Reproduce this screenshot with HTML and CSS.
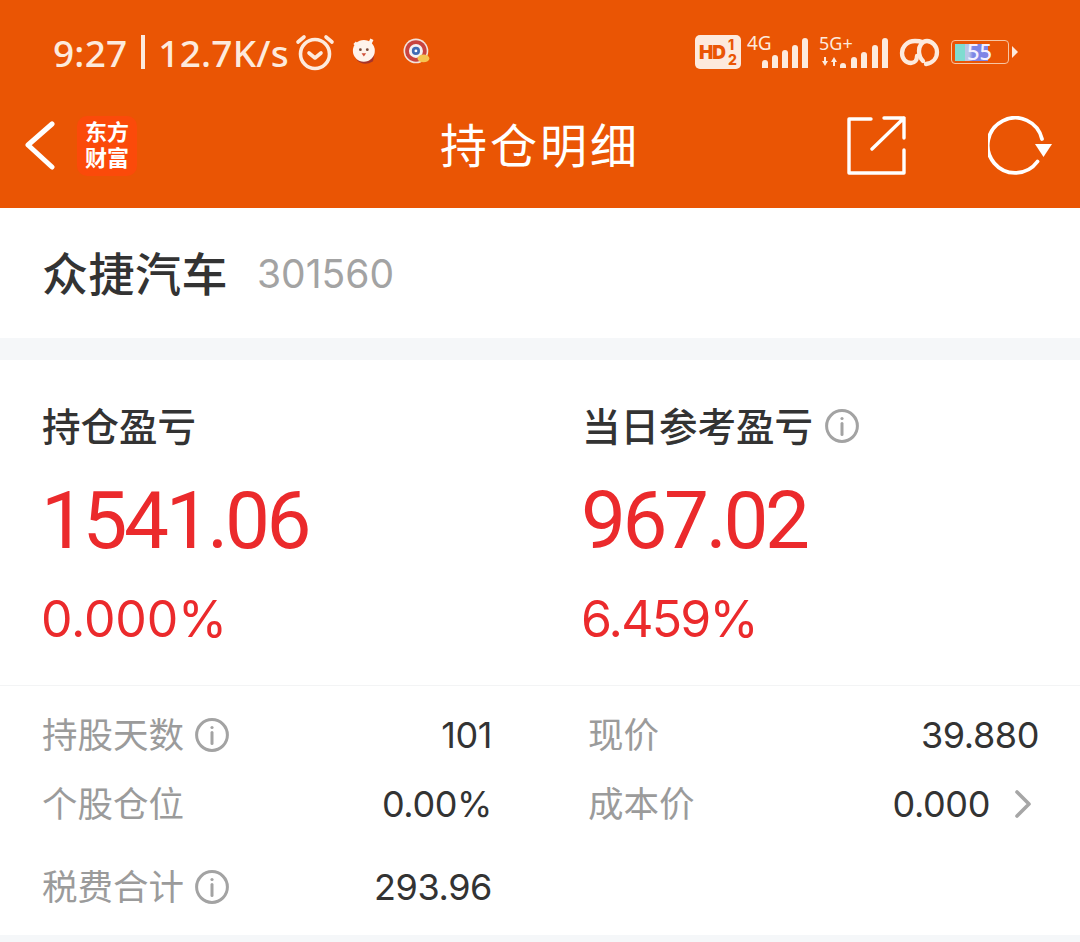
FILE: index.html
```html
<!DOCTYPE html>
<html lang="zh">

<head>
  <meta charset="UTF-8">
  <title>持仓明细</title>
  <link rel="stylesheet" href="styles.css">
</head>

<body>
  <header class="top">
    <div class="status">
      <div class="status_left">
        <span class="clock">9:27</span>
        <span class="sep"></span>
        <span class="speed">12.7K/s</span>
        <svg class="alarm" width="40" height="38" viewBox="0 0 40 38" fill="none" stroke="#fdeadd" stroke-width="3.600" stroke-linecap="round" stroke-linejoin="round">
          <circle cx="20" cy="21" r="14.500" />
          <path d="M14 20l6 5 6-5" />
          <path d="M3 9l6-5M37 9l-6-5" />
        </svg>
        <svg class="app_a" width="30" height="30" viewBox="0 0 26 26">
          <path d="M6 20q6 6 14 1l1-6-12 1z" fill="#a8352a" />
          <circle cx="12" cy="12" r="9.500" fill="#fff4ec" />
          <path d="M4 5l3 3M19 2l-2 4" stroke="#fff4ec" stroke-width="3" />
          <circle cx="9" cy="11" r="1.200" fill="#7a4a38" />
          <circle cx="15" cy="11" r="1.200" fill="#7a4a38" />
          <path d="M10 14h4l-2 3z" fill="#d0503a" />
        </svg>
        <svg class="app_b" width="28" height="28" viewBox="0 0 26 26">
          <circle cx="12" cy="12" r="11.500" fill="#f3e3dc" />
          <circle cx="12" cy="12" r="10" fill="#c8443f" />
          <circle cx="12" cy="12" r="6.500" fill="#f4f1f2" />
          <circle cx="12" cy="12" r="3.800" fill="#3f6cb5" />
          <circle cx="12" cy="12" r="1.300" fill="#fff" />
          <ellipse cx="19" cy="19" rx="5.500" ry="3.600" fill="#f5c451" />
        </svg>
      </div>
      <div class="status_right">
        <span class="hd"><span class="hd_name">HD</span><span class="hd_sim"><i>1</i><i>2</i></span></span>
        <span class="net net_4g">
          <span class="net_name">4G</span>
          <span class="bars"><i class="b1"></i><i class="b2"></i><i class="b3"></i><i class="b4"></i><i class="b5"></i></span>
        </span>
        <span class="net net_5g">
          <span class="net_name">5G+</span>
          <svg class="arrows" width="15" height="9" viewBox="0 0 15 9" fill="#fdeadd">
            <path d="M2 0h2v4h2L3 9 0 4h2zM11 9h2V5h2l-3-5-3 5h2z" />
          </svg>
          <span class="bars"><i class="b1"></i><i class="b2"></i><i class="b3"></i><i class="b4"></i><i class="b5"></i></span>
        </span>
        <svg class="link" width="41" height="29" viewBox="0 0 41 29" fill="none" stroke="#fdeadd" stroke-width="4.300" stroke-linecap="round">
          <path d="M23 4c-2-1-4-1-7-1C8 3 3 9 3 15c0 6 4 10 9 10 4 0 6-3 6-7" />
          <path d="M27 26c7-1 11-6 11-12 0-6-5-11-10-11-5 0-8 5-8 10 0 5 2 8 4 10" />
        </svg>
        <span class="battery">
          <span class="battery_box">
            <span class="battery_fill"></span>
            <span class="battery_num">55</span>
          </span>
          <span class="battery_tip"></span>
        </span>
      </div>
    </div>

    <nav class="nav">
      <div class="nav_left">
        <svg class="back" width="32" height="50" viewBox="0 0 32 50" fill="none" stroke="#fff" stroke-width="5" stroke-linecap="round" stroke-linejoin="round">
          <path d="M28 3L4 24l24 22" />
        </svg>
        <div class="logo"><span>东方</span><span>财富</span></div>
      </div>
      <h1 class="nav_title">持仓明细</h1>
      <div class="nav_right">
        <svg class="share" width="60" height="60" viewBox="0 0 60 60" fill="none" stroke="#fff" stroke-width="3.400" stroke-linecap="round" stroke-linejoin="round">
          <path d="M24 3H2v54h55V34" />
          <path d="M37 2h20v20M57 2L25 33" />
        </svg>
        <svg class="refresh" width="66" height="60" viewBox="0 0 66 60" fill="none">
          <path d="M54 23A27.500 27.500 0 1 0 49.500 45.500" stroke="#fff" stroke-width="3.800" stroke-linecap="round" />
          <path d="M47 28h17l-8.500 13z" fill="#fff" />
        </svg>
      </div>
    </nav>
  </header>

  <section class="stock">
    <h2 class="stock_name">众捷汽车</h2>
    <span class="stock_code">301560</span>
  </section>

  <section class="panel">
    <div class="profit">
      <div class="profit_col">
        <h3 class="profit_tit">持仓盈亏</h3>
        <strong class="profit_num">1541.06</strong>
        <span class="profit_rate">0.000%</span>
      </div>
      <div class="profit_col">
        <h3 class="profit_tit">当日参考盈亏
          <svg class="info" viewBox="0 0 34 34"><circle cx="17" cy="17" r="15.400" /><path d="M17 14.500v11" /><circle class="dot" cx="17" cy="9.500" r="1.600" /></svg>
        </h3>
        <strong class="profit_num">967.02</strong>
        <span class="profit_rate">6.459%</span>
      </div>
    </div>

    <div class="detail">
      <div class="detail_col">
        <div class="detail_row">
          <span class="detail_key">持股天数
            <svg class="info" viewBox="0 0 34 34"><circle cx="17" cy="17" r="15.400" /><path d="M17 14.500v11" /><circle class="dot" cx="17" cy="9.500" r="1.600" /></svg>
          </span>
          <span class="detail_val">101</span>
        </div>
        <div class="detail_row">
          <span class="detail_key">个股仓位</span>
          <span class="detail_val">0.00%</span>
        </div>
        <div class="detail_row detail_row_last">
          <span class="detail_key">税费合计
            <svg class="info" viewBox="0 0 34 34"><circle cx="17" cy="17" r="15.400" /><path d="M17 14.500v11" /><circle class="dot" cx="17" cy="9.500" r="1.600" /></svg>
          </span>
          <span class="detail_val">293.96</span>
        </div>
      </div>
      <div class="detail_col">
        <div class="detail_row">
          <span class="detail_key">现价</span>
          <span class="detail_val">39.880</span>
        </div>
        <div class="detail_row">
          <span class="detail_key">成本价</span>
          <span class="detail_val detail_link">0.000
            <svg class="more" width="18" height="30" viewBox="0 0 18 30" fill="none" stroke="#a6a6a6" stroke-width="3.600" stroke-linecap="round" stroke-linejoin="round"><path d="M3 3l12 12L3 27" /></svg>
          </span>
        </div>
      </div>
    </div>
  </section>
</body>

</html>
```

FILE: styles.css
```css
* {
  box-sizing: border-box;
  margin: 0;
}

body {
  background: #f5f7f9;
  font-family: Inter, "Noto Sans CJK SC", sans-serif;
  height: 942px;
  overflow: hidden;
}

.top {
  height: 208px;
  background: #ea5504;
  display: flex;
  flex-direction: column;
}

/* status bar */
.status {
  height: 92px;
  padding: 12px 62px 0 53px;
  display: flex;
  justify-content: space-between;
  align-items: center;
  color: #fdeadd;
}

.status_left,
.status_right {
  display: flex;
  align-items: center;
}

.clock,
.speed {
  font-size: 37px;
  font-weight: 500;
  font-family: "Noto Sans", sans-serif;
  letter-spacing: 0.2px;
}

.sep {
  width: 4px;
  height: 34px;
  margin: 0 13px 0 14px;
  background: #fdeadd;
}

.alarm {
  margin-left: 6px;
}

.app_a {
  margin-left: 15px;
}

.app_b {
  margin-left: 23px;
}

.hd {
  width: 46px;
  height: 34px;
  padding-left: 4px;
  border-radius: 5px;
  background: #fdeadd;
  color: #ea5504;
  display: flex;
  align-items: center;
}

.hd_name {
  font-size: 19px;
  font-weight: 900;
  letter-spacing: -1px;
}

.hd_sim {
  display: flex;
  flex-direction: column;
  margin-left: 3px;
  font-size: 14px;
  font-weight: 800;
  line-height: 15px;
}

.hd_sim i {
  font-style: normal;
}

.net {
  position: relative;
  display: block;
  height: 34px;
}

.net_4g {
  width: 61px;
  margin-left: 6px;
}

.net_5g {
  width: 69px;
  margin-left: 11px;
}

.net_name {
  position: absolute;
  left: 0;
  top: -2px;
  font-size: 19px;
  line-height: 20px;
  font-family: "Noto Sans", sans-serif;
}

.net_5g .net_name {
  font-size: 18px;
}

.arrows {
  position: absolute;
  left: 3px;
  bottom: 3px;
}

.bars {
  position: absolute;
  right: 0;
  bottom: 1px;
  display: flex;
  align-items: flex-end;
  gap: 4px;
}

.bars i {
  width: 6px;
  background: #fdeadd;
  border-radius: 3px 3px 0 0;
}

.net_5g .bars {
  gap: 4.5px;
}

.b1 { height: 8px; }
.b2 { height: 13px; }
.b3 { height: 18px; }
.b4 { height: 23px; }
.b5 { height: 30px; }

.net_5g .b1 { height: 5px; }
.net_5g .b2 { height: 11px; }
.net_5g .b3 { height: 16px; }

.link {
  margin-left: 11px;
}

.battery {
  margin-left: 11px;
  display: flex;
  align-items: center;
  gap: 3px;
}

.battery_box {
  position: relative;
  width: 58px;
  height: 24px;
  padding: 2.5px;
  border: 1.5px solid #f7c5a3;
  border-radius: 4px;
}

.battery_fill {
  display: block;
  height: 100%;
  width: 33px;
  background: linear-gradient(to right, #7fdcd0 0 10px, #b9c6e6 10px 14px, #7e85e6 18px);
}

.battery_num {
  position: absolute;
  left: 15px;
  top: -1px;
  font-size: 22px;
  font-weight: 500;
  line-height: 22px;
  color: #f4f0ff;
  font-family: "Noto Sans", sans-serif;
}

.battery_tip {
  width: 0;
  height: 0;
  border-left: 6px solid #fdeadd;
  border-top: 6px solid transparent;
  border-bottom: 6px solid transparent;
}

/* nav */
.nav {
  position: relative;
  flex: 1;
  padding: 0 26px 8px 24px;
  display: flex;
  justify-content: space-between;
  align-items: center;
}

.nav_left,
.nav_right {
  display: flex;
  align-items: center;
}

.logo {
  width: 60px;
  height: 60px;
  margin-left: 21px;
  padding-top: 3px;
  border-radius: 10px;
  background: #fb4a0a;
  color: #fff;
  font-size: 22px;
  font-weight: 700;
  line-height: 26px;
  text-align: center;
}

.logo span {
  display: block;
}

.nav_title {
  position: absolute;
  left: 0;
  right: 0;
  top: 16px;
  text-align: center;
  color: #fff;
  font-size: 47px;
  font-weight: 400;
  line-height: 76px;
  letter-spacing: 3px;
}

.nav_right {
  gap: 81px;
}

/* stock */
.stock {
  height: 130px;
  padding: 0 43px;
  background: #fff;
  display: flex;
  align-items: center;
  gap: 29px;
}

.stock_name {
  margin: -4px 0 0 -1px;
  color: #333;
  font-size: 46px;
  font-weight: 500;
  letter-spacing: 0.5px;
}

.stock_code {
  color: #a3a3a3;
  font-size: 39px;
}

.panel {
  height: 575px;
  margin-top: 22px;
  background: #fff;
}

.profit {
  height: 326px;
  padding: 39px 0 0 43px;
  border-bottom: 1px solid #f3f4f5;
  display: grid;
  grid-template-columns: 540px 1fr;
}

.profit_col {
  display: flex;
  flex-direction: column;
  align-items: flex-start;
}

.profit_tit {
  display: flex;
  align-items: center;
  gap: 12px;
  height: 50px;
  margin-left: -1px;
  color: #333;
  font-size: 38.5px;
  font-weight: 500;
}

.profit_tit .info {
  margin-top: 4px;
}

.profit_num {
  margin: 26px 0 0 -2px;
  color: #eb2a2c;
  font-family: Roboto, sans-serif;
  font-size: 80px;
  font-weight: 400;
  line-height: 92px;
  letter-spacing: -3.4px;
}

.profit_rate {
  margin: 23px 0 0 -2px;
  color: #eb2a2c;
  font-size: 50px;
  line-height: 58px;
  letter-spacing: -0.2px;
}

.profit_col+.profit_col .profit_rate {
  letter-spacing: -1.8px;
}

.info {
  width: 34px;
  height: 34px;
  fill: none;
  stroke: #a3a3a3;
  stroke-width: 3;
  stroke-linecap: round;
}

.info .dot {
  fill: #a3a3a3;
  stroke: none;
}

/* detail rows */
.detail {
  padding: 14px 41px 0 43px;
  display: grid;
  grid-template-columns: 449px 1fr;
  column-gap: 97px;
}

.detail_row {
  height: 69px;
  display: flex;
  justify-content: space-between;
  align-items: center;
}

.detail_row_last {
  margin-top: 14px;
}

.detail_key {
  display: flex;
  align-items: center;
  gap: 11px;
  margin-left: -1px;
  padding-bottom: 4px;
  color: #9b9b9b;
  font-size: 35.5px;
}

.detail_key .info {
  margin-top: 5px;
}

.detail_val {
  color: #333;
  font-size: 36px;
  letter-spacing: -0.4px;
}

.detail_link {
  display: flex;
  align-items: center;
  gap: 24px;
  margin-right: 7px;
}
```
